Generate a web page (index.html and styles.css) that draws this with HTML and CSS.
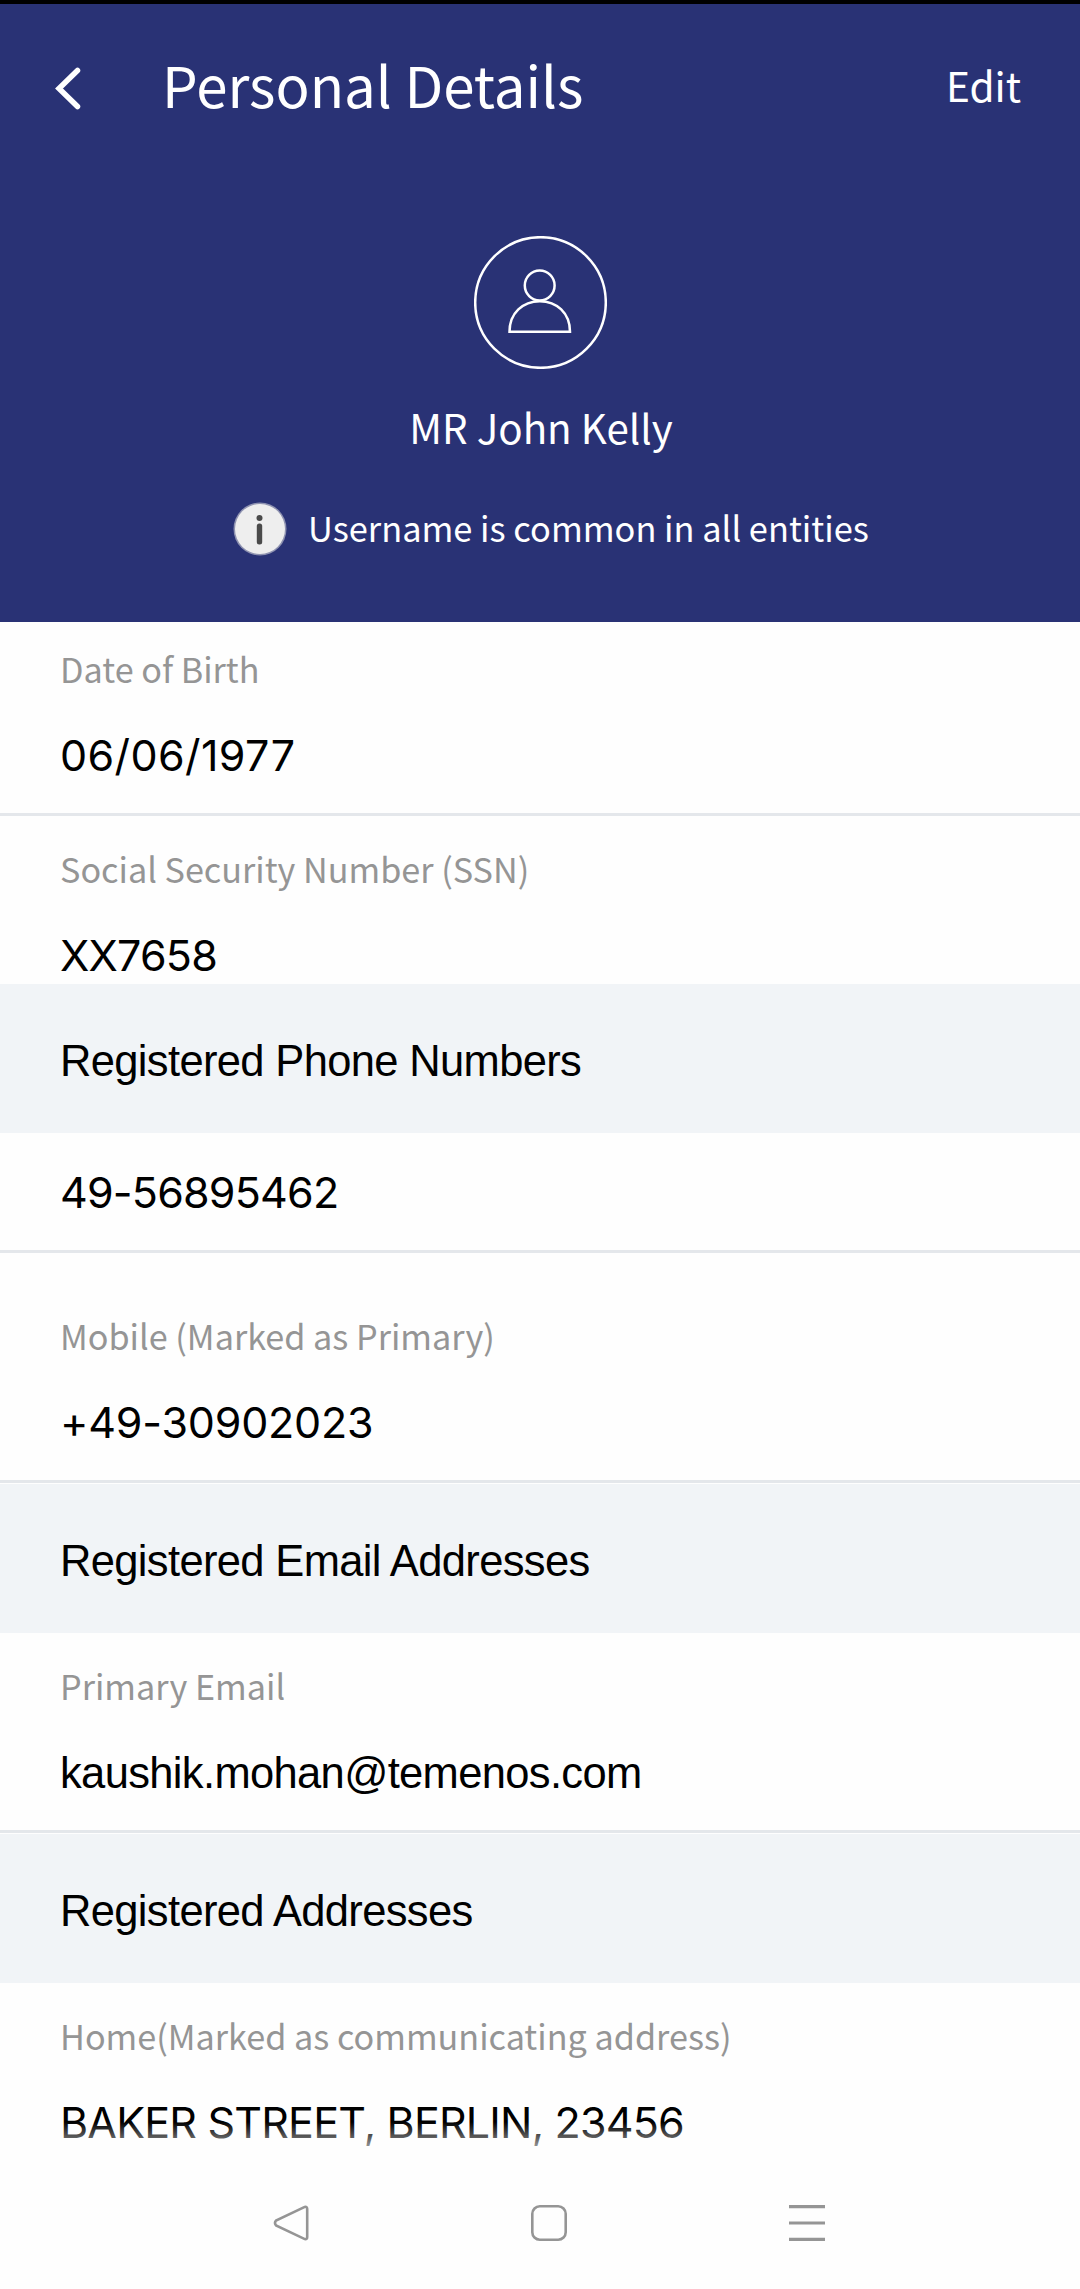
FILE: index.html
```
<!DOCTYPE html>
<html lang="en">
<head>
<meta charset="utf-8">
<title>Personal Details</title>
<link rel="stylesheet" href="styles.css">
</head>
<body>
<div class="screen">
  <header class="header">
    <div class="toolbar">
      <svg class="back" viewBox="0 0 30 44" aria-label="Back"><path d="M25.500 4.500 7 22.500 25.500 40.500"/></svg>
      <h1 class="title">Personal Details</h1>
      <span class="edit">Edit</span>
    </div>
    <svg class="avatar" viewBox="0 0 133 133">
      <circle cx="66.500" cy="66.500" r="65.300"/>
      <circle cx="65.700" cy="49.500" r="14.900"/>
      <path d="M35.500 95.800C35.500 77 49 65.200 65.800 65.200S96 77 96 95.800Z"/>
    </svg>
    <p class="name">MR John Kelly</p>
    <div class="notice">
      <svg class="info" viewBox="0 0 54 54">
        <circle class="info-ring" cx="27" cy="27" r="26.500"/>
        <circle class="info-disc" cx="27" cy="27" r="25"/>
        <circle class="info-mark" cx="26.500" cy="16" r="3"/>
        <rect class="info-mark" x="23.800" y="21.500" width="5.400" height="21" rx="2.500"/>
      </svg>
      <span class="notice-text">Username is common in all entities</span>
    </div>
  </header>

  <main class="content">
    <section class="field field-first">
      <span class="label">Date of Birth</span>
      <span class="value value-date">06/06/1977</span>
    </section>
    <section class="field field-flush">
      <span class="label">Social Security Number (SSN)</span>
      <span class="value value-ssn">XX7658</span>
    </section>
    <h2 class="band">Registered Phone Numbers</h2>
    <section class="field field-bare">
      <span class="value value-phone">49-56895462</span>
    </section>
    <section class="field field-mobile">
      <span class="label">Mobile (Marked as Primary)</span>
      <span class="value value-mobile">+49-30902023</span>
    </section>
    <h2 class="band band-after-line">Registered Email Addresses</h2>
    <section class="field field-email">
      <span class="label">Primary Email</span>
      <span class="value value-email">kaushik.mohan@temenos.com</span>
    </section>
    <h2 class="band band-after-line">Registered Addresses</h2>
    <section class="field field-last">
      <span class="label">Home(Marked as communicating address)</span>
      <span class="value value-address">BAKER STREET, BERLIN, 23456</span>
    </section>
  </main>

  <nav class="navbar">
    <svg class="nav-icon" viewBox="0 0 36 36"><path d="M31.800 1.900 3 15.600Q1 18 3 20.400L31.800 34.100Q34.200 34.600 34.200 32V4Q34.200 1.400 31.800 1.900Z"/></svg>
    <svg class="nav-icon" viewBox="0 0 36 36"><rect x="1.300" y="1.300" width="33.400" height="33.400" rx="7.500"/></svg>
    <svg class="nav-icon nav-menu" viewBox="0 0 36 36"><path d="M0 1.700H36M0 18H36M0 34.300H36"/></svg>
  </nav>
</div>
</body>
</html>
```
FILE: styles.css
```
* { box-sizing: border-box; }

body {
  margin: 0;
  background: #fefefe;
  font-family: "Noto Sans CJK SC", "Noto Sans", sans-serif;
}

h1, h2, p { margin: 0; font-weight: 400; }

.screen {
  position: relative;
  width: 1080px;
  height: 2289px;
  overflow: hidden;
}

.header {
  height: 622px;
  border-top: 4px solid #000;
  background: #293275;
  color: #fff;
  display: flex;
  flex-direction: column;
  align-items: center;
}

.toolbar {
  width: 100%;
  height: 168px;
  padding: 0 59px 0 52px;
  display: flex;
  align-items: center;
}

.back {
  width: 30px;
  height: 44px;
  fill: none;
  stroke: #fff;
  stroke-width: 5.500;
  stroke-linecap: round;
  stroke-linejoin: miter;
}

.title {
  margin: -8px auto 0 80px;
  font-size: 56.400px;
  line-height: 80px;
}

.edit {
  margin-top: -7px;
  font-size: 40.600px;
  line-height: 60px;
}

.avatar {
  width: 133px;
  height: 133px;
  margin-top: 64px;
  fill: none;
  stroke: #fff;
  stroke-width: 2.500;
}

.name {
  margin: 28px 0 0 2px;
  font-size: 40.300px;
  line-height: 60px;
}

.notice {
  width: 100%;
  margin-top: 44px;
  padding-left: 233px;
  display: flex;
  align-items: center;
  gap: 21px;
  font-size: 34.400px;
  line-height: 60px;
}

.notice-text { margin-top: -4px; }

.info { width: 54px; height: 54px; }
.info-ring { fill: #8e92b0; }
.info-disc { fill: #eee; }
.info-mark { fill: #4a4a4a; }

.content { display: flex; flex-direction: column; }

.field {
  display: flex;
  flex-direction: column;
  gap: 37px;
  padding: 27px 60px 33px;
  border-bottom: 3px solid #e4e7eb;
}

.field-first { padding-top: 21px; }
.field-flush { padding-bottom: 4px; border-bottom: 0; }
.field-bare { padding-top: 34px; }
.field-mobile { padding-top: 57px; }
.field-email { gap: 38px; padding-bottom: 32px; }
.field-last { border-bottom: 0; }

.label {
  color: #959595;
  font-size: 34.200px;
  line-height: 50px;
}

.value, .band {
  color: #000;
  font-family: Inter, "Liberation Sans", sans-serif;
  font-size: 43px;
  line-height: 50px;
  white-space: nowrap;
}

.value-date { letter-spacing: 0.400px; }
.value-ssn { letter-spacing: -0.800px; }
.value-phone { letter-spacing: -0.800px; }
.value-mobile { letter-spacing: -0.200px; }
.value-address { letter-spacing: -0.800px; }

.value-email, .band {
  font-family: "Liberation Sans", Arial, sans-serif;
  font-size: 43.500px;
  letter-spacing: -0.650px;
}

.band {
  height: 149px;
  padding: 52px 60px 47px;
  background: #f1f4f7;
}

.band-after-line { margin-top: 1px; }

/* System navigation, fading over the scrolled content */
.navbar {
  position: absolute;
  inset: auto 0 0;
  height: 173px;
  padding: 89px 255px 0 273px;
  display: flex;
  justify-content: space-between;
  background: linear-gradient(#fefefe00 6px, #fefefe 48px);
}

.nav-icon {
  width: 36px;
  height: 36px;
  fill: none;
  stroke: #959595;
  stroke-width: 2.600;
}

.nav-menu { stroke-width: 3.200; }
```
